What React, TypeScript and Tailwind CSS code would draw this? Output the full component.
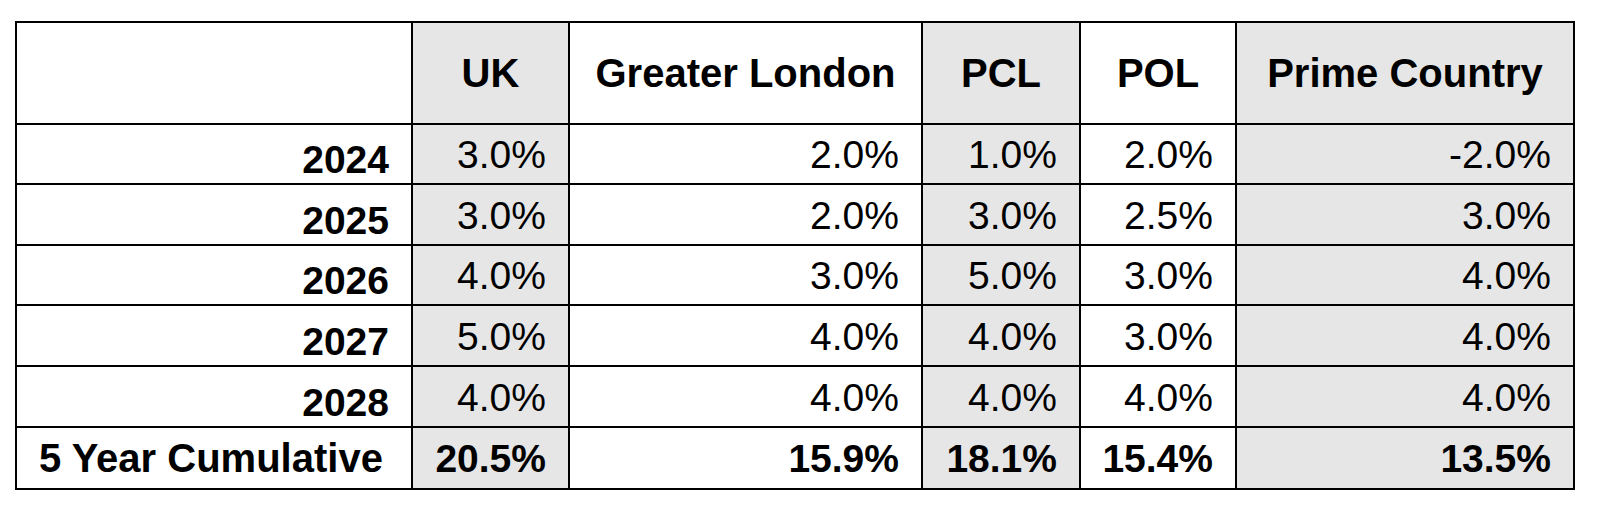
import React from "react";

type Row = { label: string; values: string[]; bold?: boolean };

const headers = ["UK", "Greater London", "PCL", "POL", "Prime Country"];
const shaded = [true, false, true, false, true];

const rows: Row[] = [
  { label: "2024", values: ["3.0%", "2.0%", "1.0%", "2.0%", "-2.0%"] },
  { label: "2025", values: ["3.0%", "2.0%", "3.0%", "2.5%", "3.0%"] },
  { label: "2026", values: ["4.0%", "3.0%", "5.0%", "3.0%", "4.0%"] },
  { label: "2027", values: ["5.0%", "4.0%", "4.0%", "3.0%", "4.0%"] },
  { label: "2028", values: ["4.0%", "4.0%", "4.0%", "4.0%", "4.0%"] },
];

const cumulative: Row = {
  label: "5 Year Cumulative",
  values: ["20.5%", "15.9%", "18.1%", "15.4%", "13.5%"],
  bold: true,
};

export default function App() {
  return (
    <div
      className="w-[1599px] h-[516px] bg-white text-black"
      style={{ fontFamily: '"Liberation Sans", Arial, sans-serif' }}
    >
      <div className="pt-[21px] pl-[15px]">
        <div className="grid w-[1560px] grid-cols-[394px_155px_351px_156px_154px_336px] grid-rows-[100px_58px_59px_58px_59px_59px_60px] gap-[2px] bg-black p-[2px] text-[39px] leading-none">
          {/* header */}
          <div className="bg-white" />
          {headers.map((h, i) => (
            <div
              key={h}
              className={`flex items-center justify-center text-[40px] font-bold pb-[1px] ${
                shaded[i] ? "bg-[#e7e6e6]" : "bg-white"
              }`}
            >
              {h}
            </div>
          ))}

          {rows.map((r) => (
            <React.Fragment key={r.label}>
              <div className="flex items-end justify-end bg-white pr-[22px] pb-[4px] font-bold">
                {r.label}
              </div>
              {r.values.map((v, i) => (
                <div
                  key={i}
                  className={`flex items-end justify-end pr-[22px] pb-[9px] ${
                    shaded[i] ? "bg-[#e7e6e6]" : "bg-white"
                  }`}
                >
                  {v}
                </div>
              ))}
            </React.Fragment>
          ))}

          <div className="flex items-end justify-start bg-white pl-[22px] pb-[10px] text-[40px] font-bold">
            {cumulative.label}
          </div>
          {cumulative.values.map((v, i) => (
            <div
              key={i}
              className={`flex items-end justify-end pr-[22px] pb-[10px] font-bold ${
                shaded[i] ? "bg-[#e7e6e6]" : "bg-white"
              }`}
            >
              {v}
            </div>
          ))}
        </div>
      </div>
    </div>
  );
}
